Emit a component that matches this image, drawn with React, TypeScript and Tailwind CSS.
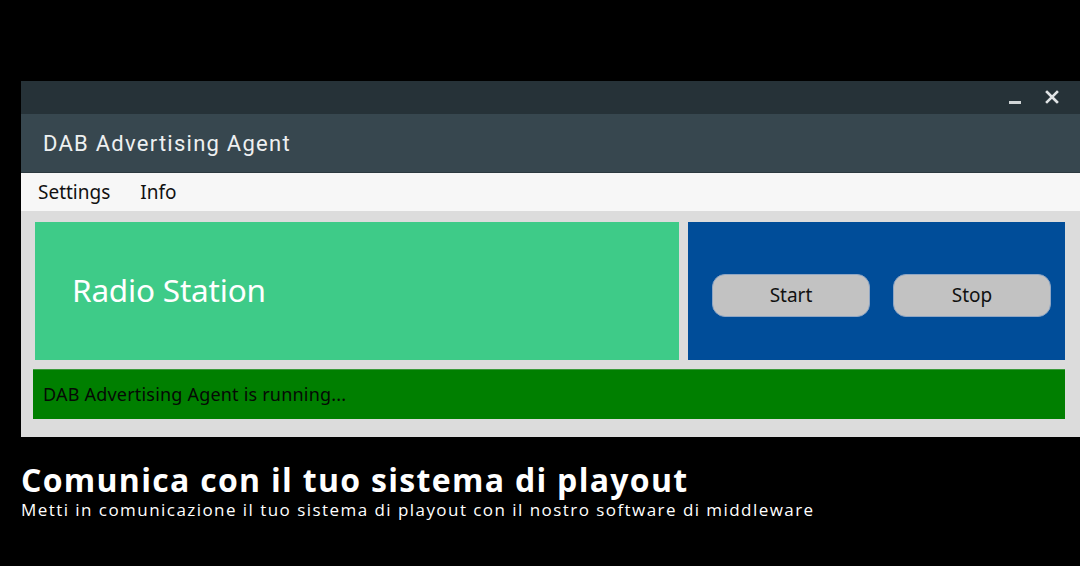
import React from 'react';

const panelFont = { fontFamily: '"Noto Sans", "DejaVu Sans", sans-serif' };

const App: React.FC = () => {
  return (
    <div className="w-[1080px] h-[566px] bg-black overflow-hidden flex flex-col">
      <div className="h-[81px]" />

      {/* Application window */}
      <div className="ml-[21px] flex flex-col bg-[#dcdcdc] h-[356px]">
        {/* title bar */}
        <div className="h-[33px] bg-[#263238] flex items-center justify-end pr-[21px] gap-[24px]">
          <div className="w-[12px] h-[3px] bg-[#d0d4d6] mt-[10px]" />
          <svg width="14" height="14" viewBox="0 0 14 14" className="mt-[-2px]">
            <path d="M2 2 L12 12 M12 2 L2 12" stroke="#e0e3e5" strokeWidth="2.6" strokeLinecap="square" />
          </svg>
        </div>

        {/* header */}
        <div className="h-[59px] bg-[#37474f] flex items-center pl-[22px] border-b border-[#2c393f]">
          <span
            className="text-[22px] text-[#eef0f1] tracking-[1.25px]"
            style={{ fontFamily: 'Roboto, "Noto Sans", sans-serif' }}
          >
            DAB Advertising Agent
          </span>
        </div>

        {/* menu */}
        <div
          className="h-[38px] bg-[#f7f7f7] flex items-center pl-[17px] gap-[30px] text-[19px] text-[#111]"
          style={panelFont}
        >
          <span>Settings</span>
          <span>Info</span>
        </div>

        {/* content */}
        <div className="flex flex-col pt-[11px] pl-[14px] pr-[15px]">
          <div className="flex gap-[9px] h-[138px]">
            <div className="w-[644px] bg-[#3ecb88] flex items-center pl-[37px] pb-[2px]">
              <span className="text-[31.5px] text-white tracking-[-0.2px]" style={panelFont}>
                Radio Station
              </span>
            </div>
            <div className="flex-1 bg-[#004d99] flex items-center pl-[24px] gap-[23px] pt-[9px]">
              <button
                className="w-[158px] h-[43px] rounded-[13px] bg-[#c2c2c2] border border-[#8fa6c4] text-[19px] text-[#111]"
                style={panelFont}
              >
                Start
              </button>
              <button
                className="w-[158px] h-[43px] rounded-[13px] bg-[#c2c2c2] border border-[#8fa6c4] text-[19px] text-[#111]"
                style={panelFont}
              >
                Stop
              </button>
            </div>
          </div>
          <div className="mt-[9px] ml-[-2px] h-[50px] bg-[#007f00] flex items-center pl-[10px] border-t border-[#3a9a3a]">
            <span className="text-[18px] text-[#050a05] tracking-[0.2px]" style={panelFont}>
              DAB Advertising Agent is running...
            </span>
          </div>
        </div>
      </div>

      {/* caption */}
      <div className="pl-[21px] pt-[25px] text-white" style={{ fontFamily: '"Open Sans", Lato, sans-serif' }}>
        <div className="text-[32px] font-bold leading-[36px] tracking-[1.3px]">
          Comunica con il tuo sistema di playout
        </div>
        <div className="text-[17px] leading-[20px] mt-[2px] tracking-[1.45px]">
          Metti in comunicazione il tuo sistema di playout con il nostro software di middleware
        </div>
      </div>
    </div>
  );
};

export default App;
